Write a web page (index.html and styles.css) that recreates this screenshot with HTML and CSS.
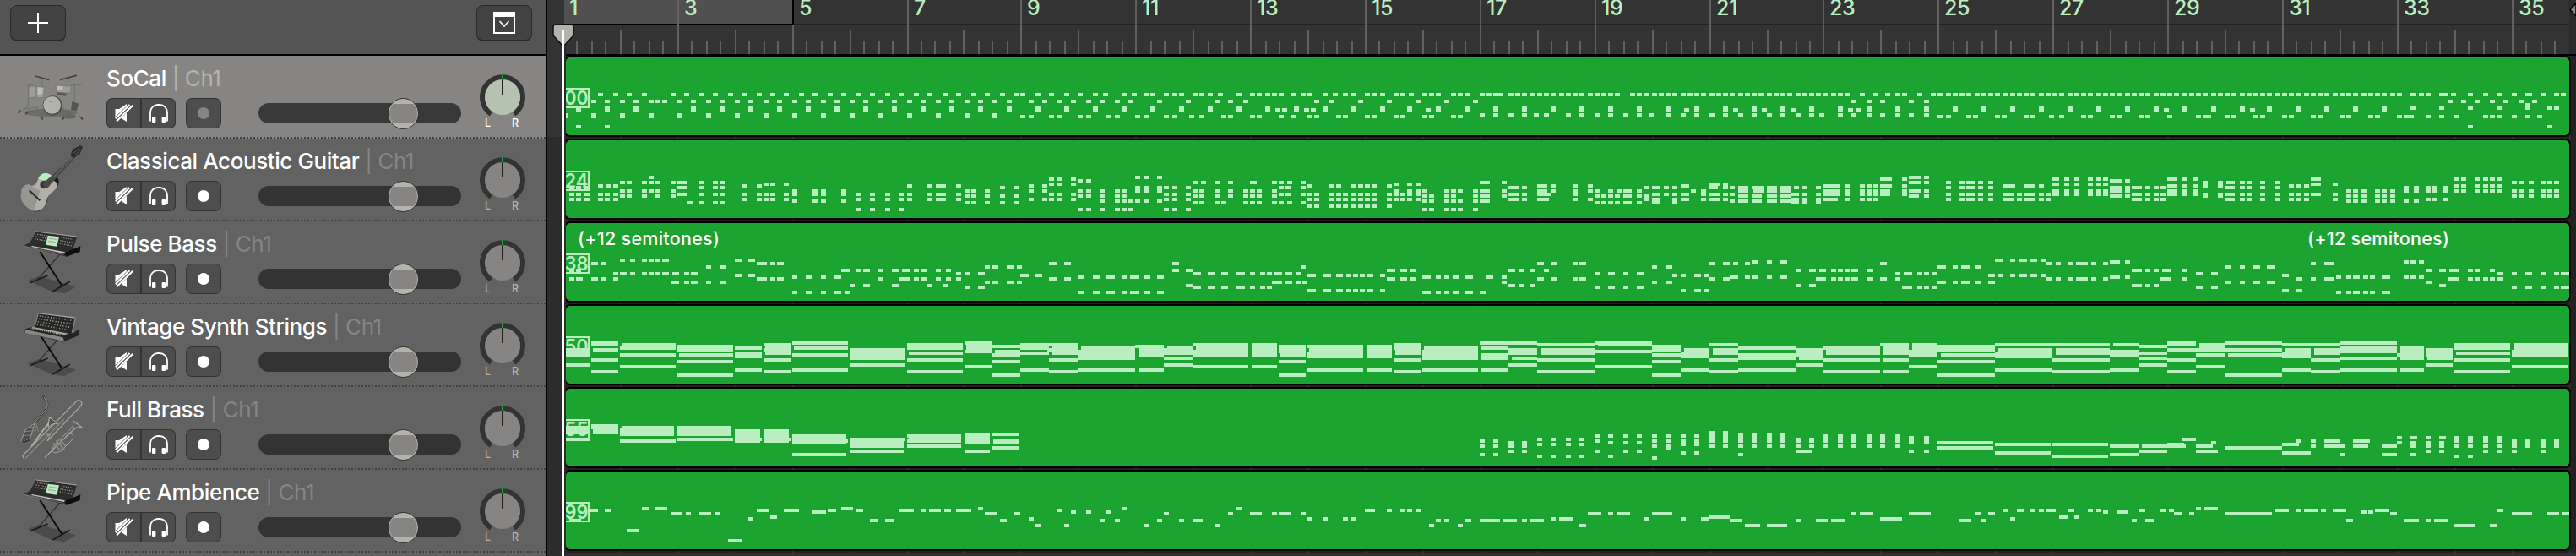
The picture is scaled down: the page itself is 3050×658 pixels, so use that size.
FILE: index.html
```html
<!DOCTYPE html>
<html lang="en">
<head>
<meta charset="utf-8">
<title>Tracks</title>
<link rel="stylesheet" href="styles.css">
</head>
<body>
<svg class="defs" aria-hidden="true">
  <defs>
    <symbol id="drums" viewBox="0 -12 300 294">
      <ellipse cx="150" cy="190" rx="95" ry="14" fill="#6b6b69"/>
      <ellipse cx="215" cy="203" rx="26" ry="9" fill="#666664"/>
      <g stroke="#6a6a68" stroke-width="2.500" fill="none">
        <path d="M118 66l6 60M214 66l-8 60M70 92v80M235 90v90M66 170l-28 22M78 172l-14 22M100 170l20 38M235 172l24 40M195 170l2 38"/>
        <path d="M62 88l34 8M222 92l40-2M55 178l50-8"/>
      </g>
      <g fill="#9d9c97" stroke="#747472" stroke-width="2">
        <path d="M72 98l26-4 2 40-28 4zM98 96l30 4-3 36-26 2zM168 92l54 4-2 24-50-2z"/>
      </g>
      <path d="M104 100l18 2-2 22-16 2zM174 96l20 1-1 14-19-1z" fill="#bdbdb4"/>
      <path d="M172 118l34 4-3 9-28-4zM226 150l24 8-8 26-20-4z" fill="#555553"/>
      <g stroke="#434341" stroke-width="5" stroke-linecap="round">
        <path d="M95 60l48 13M185 73l56-15M36 190l5-7M63 195l5-7M119 206l2 7M196 206l-2 7M258 206l4 7"/>
      </g>
      <circle cx="157" cy="165" r="35" fill="#51514f"/>
      <circle cx="155" cy="163" r="31" fill="#b3b3ab"/>
      <path d="M140 148l14 4" stroke="#8a8a84" stroke-width="4"/>
    </symbol>
    <symbol id="guitar" viewBox="0 -12 300 294">
      <path d="M72 238q24 16 44 4 20-14 24-44 4-22 30-36 14-14 6-34l-12-4-60 100z" fill="#1d1d1d"/>
      <path d="M106 128q10-18 30-17 12 2 20 12l-4 8 20 14q4 16-10 28-22 14-26 34-4 26-22 34-20 10-38-2-22-16-30-38-6-26 12-40 10-6 26-6 18-2 22-27z" fill="#b0b0a8"/>
      <path d="M46 170q4-18 26-20l40 24-20 66-16-2q-26-14-32-40z" fill="#96958f"/>
      <path d="M106 128q10-18 30-17 12 2 18 10-8 12-26 14-16 2-22-7z" fill="#b8eec0"/>
      <circle cx="126" cy="152" r="14" fill="#353535"/>
      <path d="M226 54l-104 94 8 16q12 2 20-14l82-88z" fill="#4a4a48"/>
      <path d="M226 58l-64 66" stroke="#8c8781" stroke-width="2"/>
      <path d="M220 48l8-22 28-14 8 6-10 24-22 16z" fill="#2c2c2c"/>
      <path d="M230 42l22-22M238 46l20-20" stroke="#858380" stroke-width="2"/>
      <path d="M74 172l38 36" stroke="#2d2d2d" stroke-width="6"/>
    </symbol>
    <symbol id="stand" viewBox="0 -12 300 294">
      <path d="M68 198l42-16 130 38-40 24-48-8z" fill="#4c4b4a"/>
      <path d="M184 104L104 194" stroke="#2f2f2f" stroke-width="4"/>
      <path d="M112 96l78 120" stroke="#0c0c0c" stroke-width="6"/>
      <path d="M76 206l64-26M157 237l61-35" stroke="#1a1a1a" stroke-width="5"/>
    </symbol>
    <symbol id="synth" viewBox="0 -12 300 294">
      <use href="#stand" x="0" y="-12" width="300" height="294"/>
      <path d="M98 24l145 20-18 54-24 14-146-38 22-12z" fill="#2c2c2c"/>
      <path d="M202 98l54-22-2 20-50 18z" fill="#0e0e0e"/>
      <path d="M98 24l145 18" stroke="#a5a49c" stroke-width="3"/>
      <path d="M102 34l36 5M98 42l36 6M94 50l36 7M188 46l46 7M184 56l46 8M182 66l44 9" stroke="#8c8b86" stroke-width="4" stroke-dasharray="4 4"/>
      <path d="M140 38l40 5-8 34-40-6z" fill="#b8eec0"/>
      <path d="M144 48l30 5M140 58l28 5" stroke="#b0b0a8" stroke-width="5"/>
      <path d="M80 78l118 24 3-5-117-22z" fill="#c4c4bd"/>
      <path d="M56 76l140 30" stroke="#888" stroke-width="2"/>
    </symbol>
    <symbol id="vintage" viewBox="0 -12 300 294">
      <use href="#stand" x="0" y="-12" width="300" height="294"/>
      <path d="M106 18l132 18-12 56-132-22z" fill="#262626"/>
      <path d="M104 20l132 16" stroke="#a5a29c" stroke-width="4"/>
      <path d="M110 30l116 16M107 40l116 18M104 50l116 20M101 60l116 20" stroke="#8f8d88" stroke-width="5" stroke-dasharray="4 6"/>
      <path d="M106 20l-12 44M238 36l-12 52" stroke="#8a8782" stroke-width="4"/>
      <path d="M60 76l20-6 150 22 20-16 2 22-60 24-134-34z" fill="#242424"/>
      <path d="M60 78l134 28 4 14-138-30z" fill="#8a8782"/>
      <path d="M78 75l116 23 20-6-128-23z" fill="#a9a9a2"/>
      <path d="M82 74l110 22" stroke="#222" stroke-width="4" stroke-dasharray="3 4"/>
    </symbol>
    <symbol id="brass" viewBox="0 -12 300 294">
      <g fill="none" stroke-linecap="round" stroke-linejoin="round">
        <path d="M124 22l14 22q2 14-4 24L92 118q-16 22-44 60" stroke="#3a3a38" stroke-width="7"/>
        <path d="M126 24l12 20q2 14-4 24L92 116" stroke="#a09d96" stroke-width="3"/>
        <path d="M92 118L62 138l-18 42q16 6 34-14z" fill="#4f4d4a" stroke="#a09d96" stroke-width="3"/>
        <path d="M70 130l34 2M62 146l36-4M56 160l28-2M98 118l8 28" stroke="#85827c" stroke-width="3"/>
        <path d="M54 240l-4-8L242 38q10-6 16 2t-2 16L140 178" stroke="#a5a299" stroke-width="4"/>
        <path d="M62 240L196 104" stroke="#8d8a84" stroke-width="4"/>
        <path d="M150 96q-4 22-26 44L84 196" stroke="#b3b3ab" stroke-width="5"/>
        <path d="M146 96l30 22q-22-2-34 12z" fill="#55534f" stroke="#b3b3ab" stroke-width="3"/>
        <path d="M132 156l16 2-10 20" stroke="#a5a299" stroke-width="3"/>
        <path d="M230 108l32 24q-20-4-32 8L130 238" stroke="#a5a299" stroke-width="4"/>
        <path d="M230 108q4 20-14 34l-44 42q-22 22-14 34 12 10 34-8l30-30q16-20 2-26-10-2-20 8" stroke="#a5a299" stroke-width="3"/>
        <path d="M160 188l28 28M170 180l28 28M180 172l22 24" stroke="#8f8c86" stroke-width="5"/>
      </g>
      <path d="M44 178q16 6 30-6l4 6-24 8z" fill="#333"/>
    </symbol>
    <symbol id="mute" viewBox="0 0 22 22">
      <path d="M.5 6h4.500L14 0v21L5 15.500H.5z" fill="#fff"/>
      <path d="M0 19.800L20.500.2" stroke="#4d4d4d" stroke-width="6"/>
      <path d="M.8 17.200L17.500 1M2 20.500L21.300 1.800" stroke="#fff" stroke-width="2.100"/>
    </symbol>
    <symbol id="phones" viewBox="0 0 22 22">
      <path d="M1 20.500V10a9 9 0 0 1 9-9h2a9 9 0 0 1 9 9v10.500" fill="none" stroke="#fff" stroke-width="1.800"/>
      <rect x="3" y="15" width="4.400" height="7" rx="1" fill="#fff"/>
      <rect x="14.600" y="15" width="4.400" height="7" rx="1" fill="#fff"/>
    </symbol>
  </defs>
</svg>

<div class="app">
  <aside class="panel">
    <header class="toolbar">
      <button class="tool" aria-label="Add track">
        <svg width="24" height="24" viewBox="0 0 24 24"><path d="M12 0v24M0 12h24" stroke="#fff" stroke-width="2"/></svg>
      </button>
      <button class="tool" aria-label="Track header options">
        <svg width="26" height="26" viewBox="0 0 26 26"><path d="M1 1h24v24H1z" fill="none" stroke="#fff" stroke-width="2"/><path d="M0 0h26v6H0z" fill="#fff"/><path d="M7.500 11l5.500 6 5.500-6" fill="none" stroke="#fff" stroke-width="1.600"/></svg>
      </button>
    </header>
    <div id="tracks"></div>
  </aside>
  <div class="gutter"><i></i></div>
  <main class="timeline">
    <svg class="ruler" id="ruler" width="2384" height="64"></svg>
    <div id="lanes"></div>
  </main>
  <svg class="playhead" width="26" height="658" viewBox="0 0 26 658">
    <path d="M1 32q0-3 3-3h18q3 0 3 3v10L13 55 1 42z" fill="#b3b3ab" stroke="#111" stroke-width="1.500"/>
    <path d="M12 36h2v622h-2z" fill="#fff"/>
    <path d="M14 56h2v602h-2z" fill="#2a2a2a"/>
  </svg>
</div>
<script src="app.js"></script>
</body>
</html>
```
FILE: styles.css
```css
body { margin: 0; background: #222; font-family: Inter, "Liberation Sans", sans-serif; overflow: hidden; }
.defs { position: absolute; width: 0; height: 0; }
.app { position: relative; display: flex; width: 3050px; height: 658px; overflow: hidden; }

.panel { width: 646px; height: 658px; background: #626262; border-right: 2px solid #000; flex: none; }
.toolbar { box-sizing: border-box; height: 66px; padding: 6px 16px 0 12px; display: flex; justify-content: space-between; background: #545454; border-bottom: 2px solid #000; }
.tool { box-sizing: border-box; width: 66px; height: 43px; padding: 0; display: flex; align-items: center; justify-content: center; background: #434343; border: 1px solid #2b2b2b; border-bottom-width: 2px; border-radius: 8px; }

.track { box-sizing: border-box; height: 98px; display: flex; padding-left: 10px; border-bottom: 2px dotted #414141; background: #626262; }
.track.selected { background: #868583; }
.track .instrument { width: 100px; height: 98px; flex: none; }
.track .body { width: 436px; margin-left: 16px; flex: none; }
.name { height: 50px; line-height: 53px; font-size: 26px; color: #fff; white-space: pre; font-weight: 500; letter-spacing: -0.42px; }
.name span { color: #868583; font-weight: 400; }
.selected .name span { color: #b3b3ab; }
.controls { display: flex; align-items: center; }
.pair { display: flex; width: 82px; height: 36px; }
.btn { box-sizing: border-box; width: 42px; height: 36px; display: flex; align-items: center; justify-content: center; background: #4d4d4d; border: 1px solid #333; border-radius: 7px; }
.pair .btn:first-child { border-radius: 7px 0 0 7px; border-right-width: 2px; }
.pair .btn:last-child { width: 40px; border-radius: 0 7px 7px 0; border-left: 0; }
.btn svg { width: 22px; height: 22px; }
.rec { margin-left: 12px; }
.rec i { width: 14px; height: 14px; border-radius: 50%; background: #fff; }
.selected .rec i { background: #868583; }
.slider { width: 240px; height: 24px; margin-left: 44px; border-radius: 12px; background: #333; display: flex; align-items: center; }
.selected .slider { background: #393939; }
.thumb { box-sizing: border-box; width: 37px; height: 37px; margin-left: 153px; flex: none; border-radius: 50%; border: 1px solid #333; box-shadow: inset 0 0 0 1px #b3b3ab; background: linear-gradient(#b3b3ab 0 18%, #868583 18% 82%, #b3b3ab 82%); }
.pan { width: 64px; height: 96px; margin-left: 1px; }
.pan text { font-size: 12.500px; fill: #b3b3ab; font-weight: 500; }
.selected .pan text { fill: #fff; }

.gutter { width: 18px; flex: none; background: #2c2c2c; }
.gutter i { display: block; height: 162px; background: #333; }
.timeline { width: 2384px; flex: none; }
.ruler { display: block; width: 2384px; border-bottom: 2px solid #000; overflow: visible; }
.ruler text { font-size: 25px; font-weight: 500; fill: #b8eec0; letter-spacing: -0.3px; }
.lane { display: block; }
.badge { font-size: 23px; font-weight: 600; fill: #b8eec0; }
.transpose { font-size: 21.500px; font-weight: 500; fill: #fff; letter-spacing: 0.27px; }
/* Runs over the ruler and every lane */
.playhead { position: absolute; left: 654px; top: 0; }
```
FILE: app.js
```js
const TRACKS = [
  { name: 'SoCal', icon: 'drums', badge: '00', selected: true },
  { name: 'Classical Acoustic Guitar', icon: 'guitar', badge: '24' },
  { name: 'Pulse Bass', icon: 'synth', badge: '38' },
  { name: 'Vintage Synth Strings', icon: 'vintage', badge: '50' },
  { name: 'Full Brass', icon: 'brass', badge: '55' },
  { name: 'Pipe Ambience', icon: 'synth', badge: '99' }
];

// Notes are stored in four horizontal segments per track.
// Each group is "y/height: start start-end ..." in segment units.
const SEG_X = [640, 1240, 1840, 2430];
const UNIT = 620 / 1568;

const NOTES = [
[
`330:172 217 257 303 389 430 475 516 561 602 647 688 728 774 815 860 900 946 987 1032 1073 1118 1159 1204 1245 1290 1331 1376 1416 1436 1482
354:152 192 238 278 324 344 364 410 450 496 536 582 622 668 708 754 794 840 880 926 966 1012 1052 1098 1138 1184 1224 1270 1310 1351 1396 1462 1503
378/18:192 278 450 536 622 708 794 880 966 1052 1138 1224 1310 1396 1482
384:106
402/18:71-81 152 238 324 410 496 582 668 754 840 926 1012 1098 1184 1270 1351
408:1436 1462
444:106 192`,
`330:5 51 91 137 167 223 253 288 309 349 374 395 435 455 481 511 567 607 628 653 673 693 728 759 779 824 855 885 910 951 971 996 1037 1057 1082 1123 1143 1163 1209 1229 1249 1295 1315 1335-1366 1381 1401 1421 1447 1467 1487 1507
354:30 71 116 157 202 243 329 415 501 541 587 799 845 931 1017 1103 1189 1275
378/18:51 137 223 309 395 481 567 652 738 824 910 996 1077 1163 1249 1335 1421 1507
384:683 703 769 789 1133
408:5 30 91 116 177 202 263 288 349 374 425 455 521 541 607 627 693 728 779 799 865 885 951 971 1037 1057 1123 1143 1209 1229
402:1295 1335 1381 1421 1457 1487`,
`330:0-5 15 35 56 76 101 121 142 162 182 228 248 268 293 314 334 354 379 400 420 440 465 485 506 526 551 572 592 612 637 658 678 698 723 744 764 784 804 830 850 870 916 956 991 1022 1042 1087 1128 1148 1173 1194 1214 1234 1259 1280 1300 1320 1345 1366 1386 1406 1426 1452 1472
354:890 936 976 1062 1108
378/18:0-5 76 162 248 334 420 506 592 678 764 850 936 1022 1108 1194 1280 1366 1452
384:389 536 622 708 880 905
402:35 76 121 162 207 248 283 334 379 420 465 506 551 592 637 678 723 764 794 850 890 936 976 1022 1062 1108
408:1148 1173 1234 1254 1320 1340 1406 1426 1482`,
`330:0-15 20 46 66 86 106 132 152 172 192 217 238 258 278 303 324 344 364 389 410 430 450 475 496 516 536 561 582 602 622 642 668 688 708 728 754 774 794 814 840 860 880 900 926 946 966 986 1012 1032 1072 1098 1118 1158-1184 1194 1244 1290 1330 1376 1416-1436 1462 1502 1522
354:1184 1224 1265 1310 1351 1396 1436
378/18:46 132 217 303 389 475 561 642 728 814 900 986
384:334 592
378:1072 1158 1244 1330 1482 1502
366/24:1416
408:0-5 20 86 106 172 192 258 278 344 430 450-475 516 536 602 622 688 708 774 794 860 880 946 966 1032 1052 1067 1118 1158 1204 1290 1310 1330 1376 1416 1452
444:1244 1482`
],
[
`624:324
642:238 258 303 324 344 389 410-440 475 516 536
654:172 197 217 602 647 1098 1158 1184-1214 1244 1462 1503
648:668 688 728
660:86 106 132 410-440 475 516 536 1376 1416
672:238 258 303 324 344 389 1270 1290 1330 1462 1502
672/24:754 814 840 900
684:86 106 132 172 192 217 410-440 475 516 536 602 647 668 688 728 946 986 1032 1072 1098 1158 1184-1214 1244
690:238 258 303 344 389 1270 1290 1330 1376 1416
702:86 106 132 172 192 217 602 647 668 688 728 946 986 1032 1072 1098 1158 1184-1214 1244 1462 1502
708:754 814 840 900
714:440 475 516 536 1270 1290 1330 1376 1416
738:946 986 1032 1072`,
`630:5 30 71
636:91 116
648:5 30 71
672:91 116 157 202 223
684:5 30 71
690:91 116 157 202 223
702:5 30 71
708:157 202 223 243 263 288 329
738:91 116 157 202 223 243
624:263 288 329
660/24:263 288 329
660:349 374 415
684:349 374 415
702:349 374 415
738:349 374 415
642:435 460 501 541 607-627 673 693 718 759
672:435 455 501 541 587 607 627 673
690:435 455 501 541 587 607 627 673
714:435 455 501 521 587 607 627 673 693 718 759
660:693 713 759
684:693 713 759
654:779 845 865 910 930 951 971 1017
684:779 799 845 865 885 910 930 951 971 1017
702:779 799 845 865 885 910 930 951 971
726:779 799 845 865 885 910 930 951 971 1017
648:1037 1077 1103
672/24:1037 1077 1103
684:1057
702:1017 1037 1057 1077 1103
672:1123 1189 1209 1229 1275
690:1123 1143 1189 1209 1275
708:1123 1143 1189 1209 1229 1275
738:1123 1143 1189 1209 1229 1275
642:1295-1325 1361
672:1295-1325 1361
690:1295-1325 1361
708:1295-1325
660:1381-1411 1421
684:1381-1411 1421
702:1381-1411 1421
654:1467-1497 1507
672:1467-1497 1507
684:1467-1507
672/24:1467-1497
702:1467-1502`,
`654:0-5 56 101
672:0-5 101
672/24:56
702:56 101
672:121 162 187 207-233 248 410
690:121 142 162 182 207-233 248
714:121 142 162 182 207-233 248
660:268 293-319 329 354
690/24:268
684:293-319 329 354
702/24:293-319 354
654:379-405
684:379-405
702:379-405
672/24:440
702:440
648/24:465-491 506
648:465-496
684:465-496 506
702:465-496 506
660:526
684:526
708:526
660/24:551-582 597-627 637-668 678-708
660:592-627
690:551-582 592-622 637-668 678-708
708:551-582 592-622 637-668 678-708
660:718 744 784
684:708-733 744 784
702/24:708-733 744 784
654:804-855 870 916 936 956 976-1012
672/24:804-855 870 916 936 956 976-1007
702:804-850 870 916 936 956
630:976-1012 1042
654:1042
672/24:1042
624:1062-1098 1108
642:1062-1098 1108
672:1062-1098 1108
690:1062-1093 1108
642:1173 1214 1234-1259 1270 1300
660:1173 1214 1234-1259 1270 1300
684:1173 1214 1234-1259 1270 1300
702:1173 1214 1234-1259 1270 1300
654:1345-1381 1406-1442 1452
684:1345-1376 1386 1406-1442 1452 1472
702:1345-1376 1386 1406-1442 1452 1472`,
`630:0-20 35 66 106 132 152
648:0-20 35 66 106 132 152
672/24:0-20 35 66 106 132 152
636:172-207 217
660/24:172-207 217
690:172-207 217
660:238-268 278 303 324
684:238-268 278 303 324
702:238-268 278 303 324
630:344-374 389 420
654:344-374 389 420
672/24:344-374 389 420
642/24:450 496
684/18:450 496
642:521-546 561 582 622 668
660:516-546 561 582 622 668
684:516-546 561 582 622 668
702:516-546 561 582 622 668
654:708 728 754
684:708 728 754
702:708 728 754
630:774-804
648:774-804 840
684:774-804 840
702:840
672:880 900 926 966 987 1012
690:880 900 926 966 987 1012
708:880 900 926 966 987 1012
660/24:1052 1082 1118 1138 1168
708:1052 1082
702:1118 1138 1168
630:1204 1224 1265 1290 1310 1330
654:1204 1224 1265 1290 1310 1330
672:1204 1224 1265 1290 1310 1330
642:1376 1396 1426 1462 1482 1502
672:1376 1396 1426 1462 1482 1502
690:1376 1396 1426 1462 1482 1502`
],
[
`918:238 268 303 324 344 364-384 582-602 622-642
930:152-172 182 647-677 688 708-728
942:496 536-556 1330 1351-1371 1396-1416 1426
954:86 106 900-926 946 966-986 1012 1052-1072 1083-1108 1118 1138-1158 1184 1214
966:217-233 238-258 268 303 324 344 364-384 395-415 430 450-470 1244 1270 1310-1330
972:582-602 622-642 1436-1462 1482-1502
978:754 794-814 840 880-900
984:86 106-126 152-172 182 217 647-677 688 708-728 1012 1072-1108 1118 1138-1158 1184 1214 1244
996:389-415 430 450-470 496 536-556 1330 1351-1371 1396-1416 1426
1008:926 966-986 1052-1072 1158 1204
1014:1270 1310-1330
1032:754 794-814 840 880-900 910`,
`930:5-30 51-71 374-395 1467-1487 1507-1528
942:759
954:374-395 415-435 1017-1042 1057-1077 1087 1381-1401 1411 1447 1487
966:435-460 481-501 521-541 567-592 607 637 658 678-703 713-733 744
972:779-804 824-850 865-885 895 916 936 956-976 996
978:91-111 137-157 177-202 223 248-273 288-309 329-349 1123-1148 1163 1189 1214-1234 1249-1275 1315-1335 1361
984:5-30 51-71 1017-1042 1057-1077 1087 1467-1487 1507-1528
996:673-703 713-733 744 764 1361
1008:415-435 1381-1401 1411 1447
1014:435-460 481-501 521-541 567-592 607 637 658
1026:779-804 824-850 865-885 895 916 936 956-976 996
1032:91-111 137-157 177-202 223 248-273 288-309 329-349 1123-1148 1163 1189 1214-1234 1249-1275 1295-1315`,
`918:1320-1345 1366 1391-1416 1426-1447 1457
924:592-612 637 678-698
930:0-10 56 76-96 465 506-526 536 572 976-996 1472-1492
942:293 334-354 1148-1173 1194 1219-1244 1259-1280
954:723 764-784 794-814 830 850 870 890-910 936-956
966:121 162-182 207 248-268 1022 1047-1072 1087 1108 1133
972:354 379 420-440 450 1300-1320 1330 1366 1391-1416 1426-1447 1457
978:526-551 572 592-612 637 678-698
984:0-10 56 76-96 465 506-526 784-814 830 850 870 890-910 936-956 976-996 1022 1472-1492
996:293 334-354 1148-1173 1194 1219-1244 1259-1280 1300-1320
1008:723 764-784
1014:121 162-182 207 248-268 1042-1072 1087 1108 1133
1026:379 420-440 450`,
`924:172-202 217 1052 1072 1098
930:10 46 71-106 116 152 774 814-845
942:516-536 561 602-622 642-668
954:238-268 278 303 329-354 389 1118-1138 1158-1179 1189-1219 1244 1265 1310
966:430-450 475-496 1330-1351 1376 1416-1436 1462 1502 1522-1548
972:688-708
978:172-202 217 850 880 900-920 931 951 986-1012 1052 1072 1098
984:10 46 71-106 116 152 324-354 389 728-749 774 814-845 1184-1219 1244 1265 1290 1310 1330-1351
996:516-536 561 602-622 642-668 1118-1138
1008:238-268 278 303 1158-1179
1014:430-450 475-496 1376 1416-1436 1462 1502 1522-1548
1026:688-708 728-749
1032:850 880 900-920 931 951 986-1012`
],
[
`186/30:71-147
240:71-147
162/18:152-233
186:157-233
222:152-233
264:152-233
168/24:243-405
180:238-405
204:238-405
246:238-405
174/24:410-577
204:415-577
228:410-577
276:410-577
180:582-663
198/24:582-663
258:582-663
168/42:673-749
168:668-680
186:668-680
222:668-749
264:668-749
162:754-921
180:759-921
204:754-921
258:754-921
186/42:926-1093
240:926-1093
168/24:1098-1265
198:1103-1265
222:1098-1265
264:1098-1265
162/42:1275-1351
162:1270-1351
192:1270-1351
246:1270-1351
174:1351-1436
192/24:1361-1436
204:1351-1436
228:1351-1436
276:1351-1436
168/24:1436-1522
198:1436-1522
258:1436-1522`,
`168/42:15-91
168:0-91
186:0-91
198:0-5
222:5-91
264:5-91
258:0-5
180/48:101-263
192/36:91-263
258:91-263
174/42:273-349
174:263-349
258:273-349
180/30:359-435
186/24:349-435
216:349-435
240:349-435
168/48:445-602
168:435-602
192/24:435-602
246:435-602
168/48:612-688
246:612-688
174/42:698-774
174/30:693-774
228:693-774
276:693-774
174/48:784-946
174:779-946
198/24:779-946
258:779-946
174/48:956-1032
258:956-1032
168/42:1042-1118
168/24:1037-1118
222:1037-1118
264:1037-1118
180/48:1128-1290
192/36:1123-1290
258:1123-1290
162:1295-1467
180:1300-1381
204/24:1300-1381
258:1300-1381
186/24:1381-1467
216:1391-1467
240:1381-1467
168:1467-1568
186/24:1477-1568
222:1467-1568
264:1467-1568`,
`168:0-121
186/24:0-121
222:0-121
264:0-121
162/18:132-293
162:121-293
192:121-293
246:121-293
174/24:293-379
204:293-379
228:293-379
276:293-379
186/36:389-465
198/24:379-465
258:379-465
168:465-551
186/24:475-551
222:465-551
264:465-551
180:551-723
204/24:551-723
258:551-723
186/42:733-804
186/30:723-804
240:723-804
180/30:814-976
180:804-976
222:804-976
264:804-976
168/42:986-1062
168:976-1062
222:986-1062
264:986-1062
168/48:1072-1148
192/24:1062-1148
246:1062-1148
174/24:1148-1320
204:1158-1320
228:1148-1320
276:1148-1320
168:1320-1492
186/36:1330-1492
198/24:1320-1492
258:1320-1492
168:1492-1560
186/24:1502-1560
222:1492-1560
264:1492-1560`,
`168:10-172
186/24:10-172
222:0-172
264:0-172
168:182-258
192/24:172-258
258:172-258
174:258-344
198:258-344
216:258-344
240:258-344
162/18:344-430
186:344-430
222:344-430
264:344-430
168/24:440-516
186:430-516
204:430-516
246:430-516
162:516-688
186:516-688
204:526-688
276:516-688
168:688-860
186/36:698-774
198/24:688-774
258:688-774
186/24:784-860
222:774-860
264:774-860
162:860-1032
180/24:860-1032
216:860-1032
258:860-1032
180/48:1042-1113
204:1032-1045
258:1042-1113
186/42:1123-1199
186/30:1118-1199
240:1118-1199
168/24:1204-1371
198:1209-1371
222:1204-1371
264:1204-1371
168/48:1381-1543
192/24:1376-1543
246:1376-1543`
],
[
`462/30:76-142
504:71-147
456/36:157-233
456/18:152-233
462/36:243-400
468/30:238-400
510:238-405
462/36:410-572
504:410-577
474/48:587-658
474/30:582-658
510:582-658
504:582-663
474/48:668-744
504:668-749
492/36:754-916
510:754-921
558:754-916
504/36:926-1087
504:926-1093
546:926-1087
492/30:1103-1259
492:1098-1259
510:1098-1259
528:1098-1259
486/42:1270-1345
546:1270-1345
486:1351-1431
510/18:1356-1431
534:1351-1431`,
`510:1295 1335
528:1295 1335
558:1295 1335
516/24:1381 1421
546:1381 1421
504:1467 1507
522:1467 1507
564:1467 1507`,
`504:0-5 35 76
522:0-5 35 76
564:0-5 35 76
492:121 162 207 248 293 334 379 420
510:121 293 334
516:162 207 248
510/24:379 420
528:293
528/18:334
546:121 207 248
564:162
570:293
552:379 420
480/42:465 506
486/36:551 592 637 678
528:465 506 551 592 637 678
558:551
504/18:723 764
528:723 764
546:723-774
492/30:804 850 890 936 976 1022
528:804 850 890 936 976 1022
498/30:1062 1108
546:1062 1108
516:1148-1315
534:1148-1315
522:1320-1487
552:1320-1487
522:1492-1560
564:1492-1560`,
`522:0-167
564:0-167
528:172-258
558:172-258
528:268-400
546:258-344
522:344-395
504:389-430
528:430-481
516:475
546:430-496
534:516-688
522:688-738
510:728
552:688-774
510:774
528:774
510:814-860
528:814-875
558:860
510:900-951
528:900-946
528:986-1032
558:986-1032
498:1032
516:1032
498:1072-1093 1118 1158-1179
516/24:1072 1118 1158
558:1072
546:1118 1158
498/24:1204 1244 1290 1330
528:1204 1244 1290 1330
564:1204 1244
546:1290 1330
510/30:1376 1416 1462 1502
546:1376 1462`
],
[
`756:142-172 192-212
792:86-121
750:303-324 344-379 900-936 1310
768:389-425 435 475-511 521 1330-1366 1416-1436
756:647-683 728-774 860-885 946-966 1073-1118 1138 1163-1199 1209-1229 1244-1290
762:814-855
780:688-708
786:622 1462
792:986-1012 1032-1057 1376-1396
810:1482
828:258-293
864:561-602`,
`756:30
762:71 116 177
750:223 567
810:51 288 501 1143 1229
792:157 202 329 395 435-465
768:349 541 607-642 673 693-728 759
786:779 824-840 885 910
756:951-981 1017 1057 1077 1103
792:1163 1189 1249-1270 1295-1356 1366-1406 1421 1447-1487
786:1507`,
`786:0-5 15-56 268 379 440-465 976-1042 1366
810:76-96 572-617 637-698
768:101-142 162 187-228 293-354 890 916-956 1062-1128 1259-1280 1300-1320
780:465-526
792:526-561 723 784-819 830-870 1214-1249 1280
756:1345 1386-1406 1426 1452 1472-1502`,
`756:0-10 46-66 106 132 258-278 324 349 668-708 728 754-794 804 840-880 966-1007 1330-1351
780:20-46 66
762:152 192-228 926 946
792:238 278-303 880-900 1052-1098 1118 1143-1184
768:364-389 410 1012-1032 516-658 1376-1436 1482-1517 1528-1548
750:430 455-496
810:1204-1265 1310-1330`
]
];

const even = v => 2 * Math.round(v / 2);
const barX = bars => 2 * Math.floor((bars * 67.87 + 0.8) / 2);

function notePath(index) {
  const originY = index < 3 ? 0 : 350;
  const top = 68 + 98 * index;
  let d = '';
  NOTES[index].forEach((segment, s) => {
    segment.split('\n').forEach(line => {
      const [head, list] = line.split(':');
      const [y, h = 12] = head.split('/').map(Number);
      const py = even(originY + y / 3) - top;
      list.split(' ').forEach(item => {
        const [a, b] = item.split('-').map(Number);
        const x1 = even(SEG_X[s] + a * UNIT) - 670;
        const x2 = b === undefined ? x1 + 6 : even(SEG_X[s] + b * UNIT) - 670;
        d += `M${x1} ${py}H${x2}V${py + h / 3}H${x1}z`;
      });
    });
  });
  return d;
}

document.getElementById('tracks').innerHTML = TRACKS.map(t => `
  <section class="track${t.selected ? ' selected' : ''}">
    <svg class="instrument"><use href="#${t.icon}"/></svg>
    <div class="body">
      <div class="name">${t.name}<span> | Ch1</span></div>
      <div class="controls">
        <div class="pair"><div class="btn"><svg><use href="#mute"/></svg></div><div class="btn"><svg><use href="#phones"/></svg></div></div>
        <div class="btn rec"><i></i></div>
        <div class="slider"><div class="thumb"></div></div>
      </div>
    </div>
    <svg class="pan" viewBox="563 66 64 96">
      <path d="M581.500 135A24 24 0 1 1 608.500 135" fill="none" stroke="#333" stroke-width="6"/>
      <circle cx="595" cy="115" r="21" fill="${t.selected ? '#b5c2b0' : '#868583'}"/>
      <path d="M594 88h2v6h-2z" fill="#1ca431"/>
      <path d="M594 94h2v18h-2z" fill="#222"/>
      <text x="574" y="150">L</text><text x="606" y="150">R</text>
    </svg>
  </section>`).join('');

let ruler = '<path d="M0 0h2384v64H0z" fill="#333"/><path d="M2 0h270v28H2z" fill="#505050"/><path d="M0 28h2376v2H0z" fill="#222"/><path d="M0 28h274v2H0zM272 0h2v28h-2z" fill="#000"/>';
for (let beat = 1; beat < 143; beat++) {
  const bars = beat / 4;
  const y = beat % 8 === 0 ? (beat === 16 ? 30 : 0) : beat % 4 === 0 ? 36 : 48;
  ruler += `<path d="M${barX(bars)} ${y}h2V64h-2z" fill="#645f5c"/>`;
}
for (let bar = 1; bar < 36; bar += 2) {
  ruler += `<text x="${barX(bar - 1) + 8}" y="18">${bar}</text>`;
}
ruler += '<path d="M2376 0h8v64h-8z" fill="#2a2a2a"/><path d="M2384 4l-7 7.500 7 7.500z" fill="#868583" stroke="#000" stroke-width="1.500"/>';
document.getElementById('ruler').innerHTML = ruler;

const gapTicks = Array.from({ length: 36 }, (_, i) => `M${barX(i)} 96h2v2h-2z`).join('');
document.getElementById('lanes').innerHTML = TRACKS.map((t, i) => `
  <svg class="lane" width="2384" height="98" viewBox="0 0 2384 98">
    <path d="M0 0h2384v98H0z" fill="#222"/>
    <path d="${gapTicks}" fill="#333"/>
    <rect x="2" y="0" width="2376" height="96" rx="7" fill="#000"/>
    <rect x="4" y="2" width="2372" height="92" rx="5" fill="#1ca431"/>
    <svg x="4" y="2" width="2372" height="92">
      <path d="M-2 37H27V59H-2" fill="none" stroke="#b8eec0" stroke-width="2"/>
      <text class="badge" x="-1.500" y="55.500" textLength="28" lengthAdjust="spacingAndGlyphs">${t.badge}</text>
      <path d="${notePath(i)}" fill="#b8eec0"/>
      ${i === 2 ? '<text class="transpose" x="14" y="26">(+12 semitones)</text><text class="transpose" x="2062" y="26">(+12 semitones)</text>' : ''}
    </svg>
  </svg>`).join('') + `<svg class="lane" width="2384" height="4"><path d="M0 0h2384v4H0z" fill="#303030"/></svg>`;
```
